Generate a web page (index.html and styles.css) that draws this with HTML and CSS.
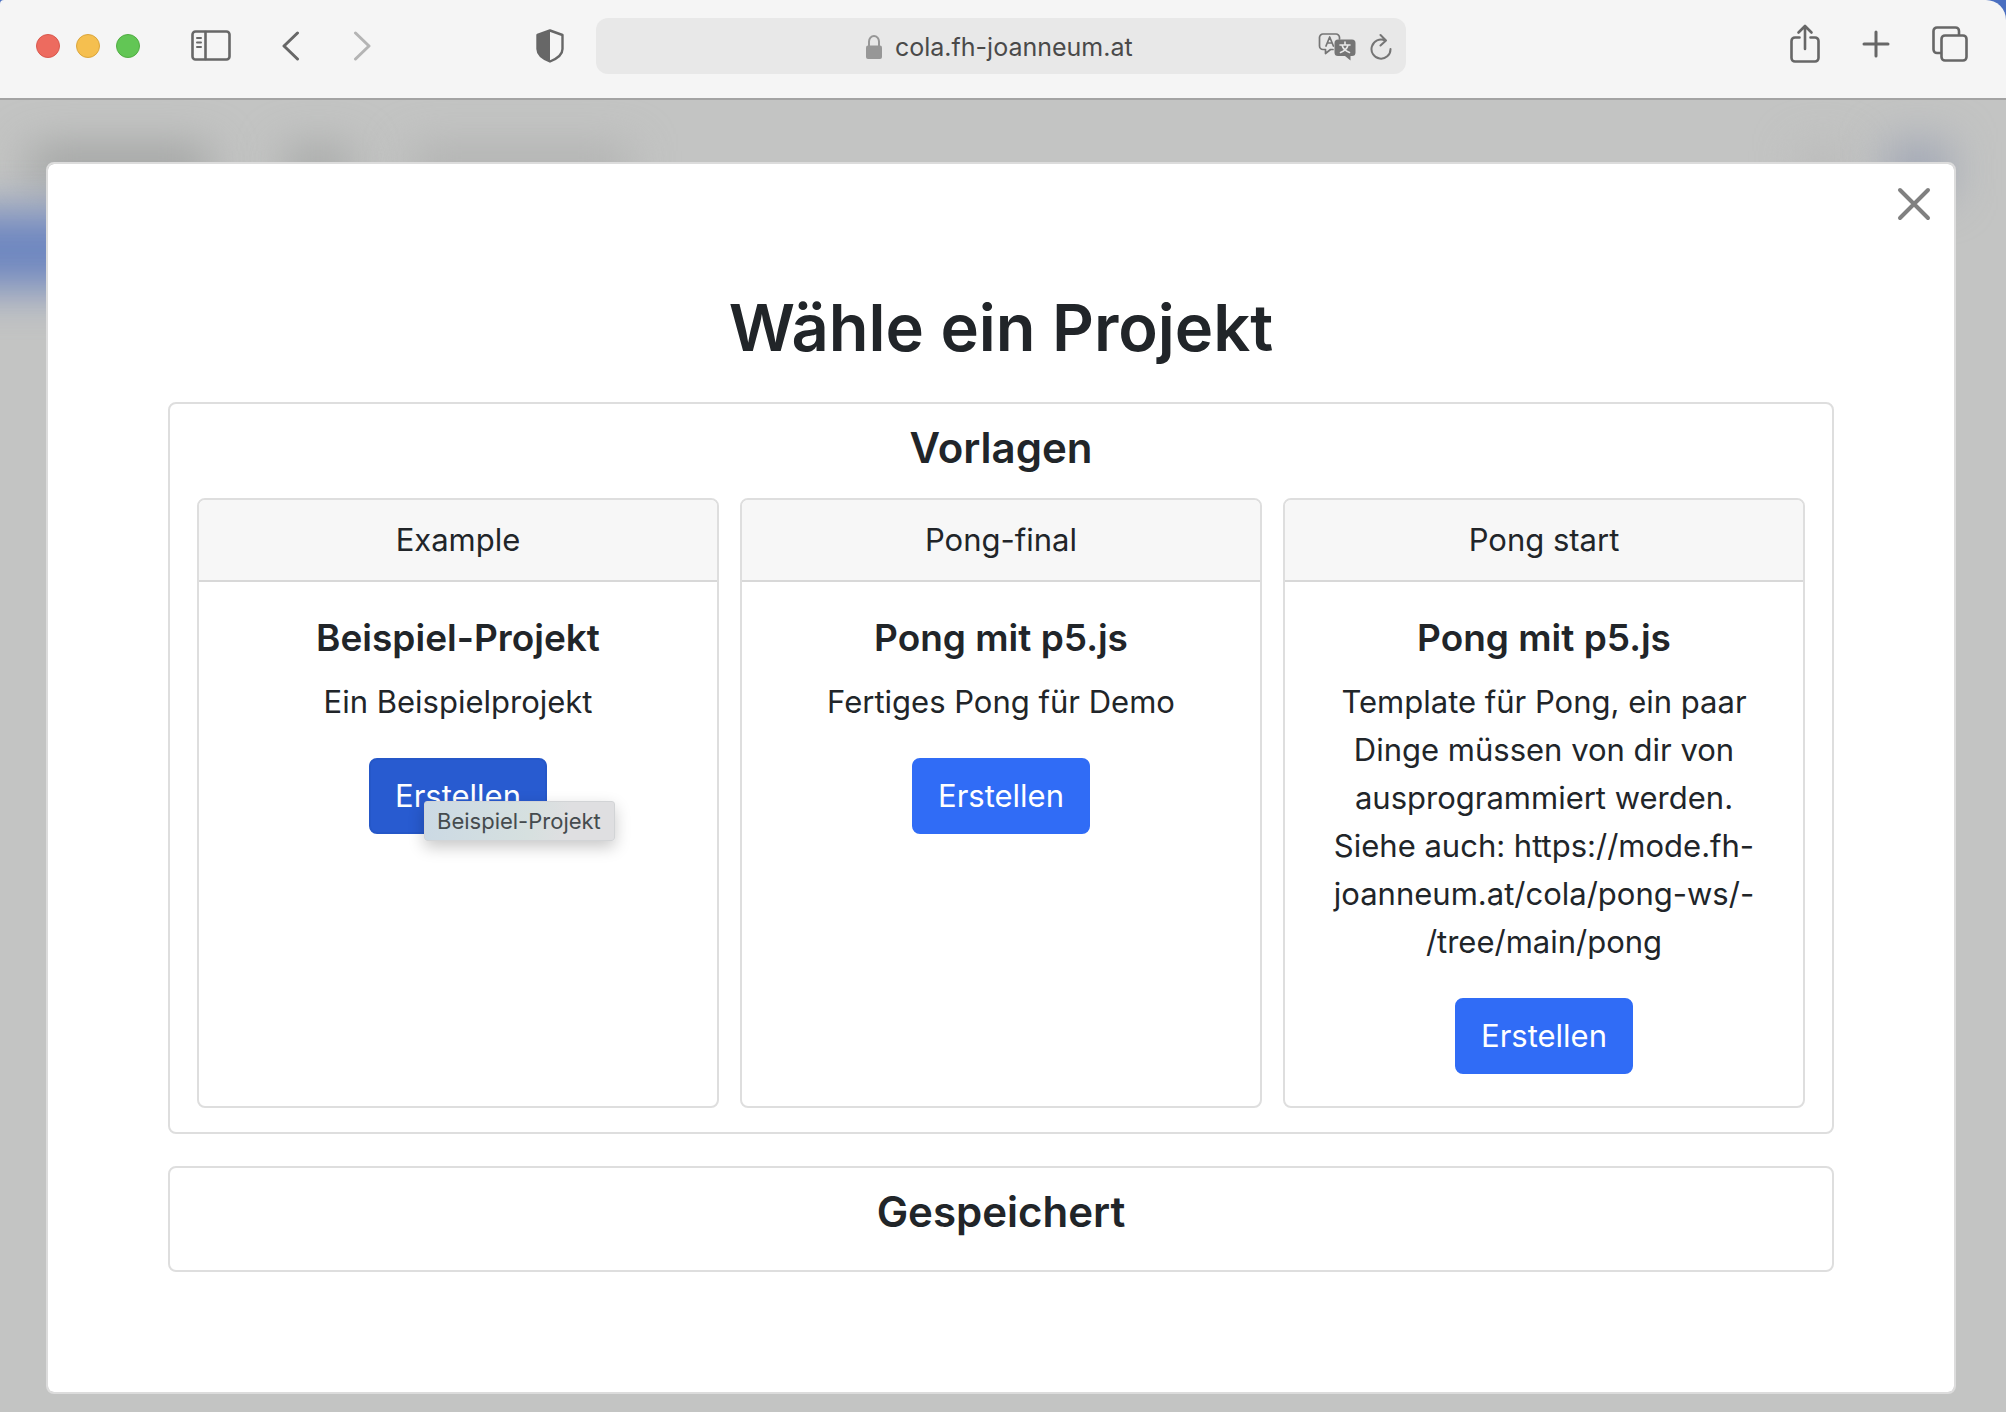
FILE: index.html
```html
<!DOCTYPE html>
<html lang="de">
<head>
<meta charset="utf-8">
<title>cola.fh-joanneum.at</title>
<link rel="stylesheet" href="styles.css">
</head>
<body>
<header class="toolbar">
  <div class="toolbar-side">
    <div class="lights">
      <span class="light light-close"></span>
      <span class="light light-min"></span>
      <span class="light light-max"></span>
    </div>
    <button class="tool tool-sidebar" aria-label="Seitenleiste">
      <svg width="40" height="32" viewBox="0 0 40 32" fill="none" stroke="#676767" stroke-width="2.6" stroke-linecap="round">
        <rect x="1.5" y="1.5" width="37" height="28" rx="3"/>
        <path d="M14.5 2v27"/>
        <path d="M6 8h4M6 12.500h4M6 17h4" stroke-width="2"/>
      </svg>
    </button>
    <button class="tool tool-back" aria-label="Zurück">
      <svg width="18" height="30" viewBox="0 0 18 30" fill="none" stroke="#676767" stroke-width="3" stroke-linecap="round" stroke-linejoin="round"><path d="M15.500 2 2 15l13.500 13"/></svg>
    </button>
    <button class="tool tool-forward" aria-label="Vorwärts" disabled>
      <svg width="18" height="30" viewBox="0 0 18 30" fill="none" stroke="#b4b4b4" stroke-width="3" stroke-linecap="round" stroke-linejoin="round"><path d="M2.500 2 16 15 2.500 28"/></svg>
    </button>
    <button class="tool tool-shield" aria-label="Datenschutzbericht">
      <svg width="28" height="34" viewBox="0 0 28 34">
        <path d="M14 1.500 26.500 6v14c0 5-5 9.500-12.500 12.500C6.500 29.500 1.500 25 1.500 20V6z" fill="none" stroke="#676767" stroke-width="2.400" stroke-linejoin="round"/>
        <path d="M14 1.500v31C6.500 29.500 1.500 25 1.500 20V6z" fill="#676767"/>
      </svg>
    </button>
  </div>
  <div class="address">
    <label class="address-field">
      <svg width="18" height="26" viewBox="0 0 18 26"><path d="M4 12V7.500a5 5.500 0 0 1 10 0V12" fill="none" stroke="#979797" stroke-width="2"/><rect x="1" y="11.500" width="16" height="13.500" rx="2" fill="#979797"/></svg>
      <input class="address-input" type="text" value="cola.fh-joanneum.at" aria-label="Adresse">
    </label>
    <div class="address-tools">
      <button class="tool" aria-label="Übersetzen">
        <svg width="38" height="28" viewBox="0 0 38 28" fill="none" stroke-linecap="round" stroke-linejoin="round">
          <g stroke="#757575" stroke-width="1.700">
            <path d="M15 16.500h-2.500L7.500 20.500v-4H5a3.500 3.500 0 0 1-3.500-3.500V4.500A3.500 3.500 0 0 1 5 1h13a3.500 3.500 0 0 1 3.500 3.500V6"/>
            <path d="M8 13 11.700 4l3.700 9M9.300 10h4.800"/>
          </g>
          <path d="M20 6.500h14a3.500 3.500 0 0 1 3.500 3.500v9.500a3.500 3.500 0 0 1-3.500 3.500h-1.500v4.500L27 23h-7a3.500 3.500 0 0 1-3.500-3.500V10A3.500 3.500 0 0 1 20 6.500z" fill="#757575"/>
          <path d="M27 9v2.500M22 12h10M24 12c.7 3 3.500 6 7.500 7.500M30 12c-.7 3-3.500 6-7.500 7.500" stroke="#e8e8e8" stroke-width="1.600"/>
        </svg>
      </button>
      <button class="tool" aria-label="Neu laden">
        <svg width="22" height="28" viewBox="0 0 22 28" fill="none" stroke="#757575" stroke-width="2" stroke-linecap="round" stroke-linejoin="round"><path d="M20.500 16A9.500 9.500 0 1 1 15 7.500M10.500 2l5.500 5.500-5.500 5"/></svg>
      </button>
    </div>
  </div>
  <div class="toolbar-side toolbar-right">
    <button class="tool" aria-label="Teilen">
      <svg width="30" height="40" viewBox="0 0 30 40" fill="none" stroke="#676767" stroke-width="2.600" stroke-linecap="round" stroke-linejoin="round"><path d="M9.500 13.500H5a3.500 3.500 0 0 0-3.500 3.500v17A3.500 3.500 0 0 0 5 37.500h20a3.500 3.500 0 0 0 3.500-3.500V17a3.500 3.500 0 0 0-3.500-3.500h-4.500M15 25V2.500M8.500 8.500 15 2l6.500 6.500"/></svg>
    </button>
    <button class="tool" aria-label="Neuer Tab">
      <svg width="28" height="28" viewBox="0 0 28 28" fill="none" stroke="#676767" stroke-width="3" stroke-linecap="round"><path d="M14 2v24M2 14h24"/></svg>
    </button>
    <button class="tool" aria-label="Tabübersicht">
      <svg width="36" height="36" viewBox="0 0 36 36" fill="none" stroke="#676767" stroke-width="2.600" stroke-linejoin="round"><rect x="9.500" y="9.500" width="25" height="25" rx="3.500"/><path d="M9 27H5a3.500 3.500 0 0 1-3.500-3.500V5A3.500 3.500 0 0 1 5 1.500h18.500A3.500 3.500 0 0 1 27 5v4"/></svg>
    </button>
  </div>
</header>

<main class="stage">
  <div class="haze" aria-hidden="true">
    <span class="blot blot-brand"></span>
    <span class="blot blot-nav"></span>
    <span class="blot blot-links"></span>
    <span class="blot blot-grey"></span>
    <span class="blot blot-button"></span>
    <span class="blot blot-band"></span>
  </div>

  <section class="modal" role="dialog" aria-labelledby="modal-title">
    <button class="modal-close" aria-label="Schließen">
      <svg width="34" height="34" viewBox="0 0 34 34" fill="none" stroke="#808080" stroke-width="4" stroke-linecap="round"><path d="M3 3l28 28M31 3 3 31"/></svg>
    </button>
    <h1 class="modal-title" id="modal-title">Wähle ein Projekt</h1>

    <section class="panel">
      <h4 class="panel-title">Vorlagen</h4>
      <div class="cards">
        <article class="card">
          <div class="card-header">Example</div>
          <div class="card-body">
            <h5 class="card-title">Beispiel-Projekt</h5>
            <p class="card-text">Ein Beispielprojekt</p>
            <div class="action">
              <button class="btn btn-hover" aria-describedby="tip">Erstellen</button>
              <span class="tooltip" role="tooltip" id="tip">Beispiel-Projekt</span>
            </div>
          </div>
        </article>
        <article class="card">
          <div class="card-header">Pong-final</div>
          <div class="card-body">
            <h5 class="card-title">Pong mit p5.js</h5>
            <p class="card-text">Fertiges Pong für Demo</p>
            <div class="action"><button class="btn">Erstellen</button></div>
          </div>
        </article>
        <article class="card">
          <div class="card-header">Pong start</div>
          <div class="card-body">
            <h5 class="card-title">Pong mit p5.js</h5>
            <p class="card-text">Template für Pong, ein paar Dinge müssen von dir von ausprogrammiert werden. Siehe auch: https://mode.fh-<wbr>joanneum.at/cola/pong-ws/-<wbr>/tree/main/pong</p>
            <div class="action"><button class="btn">Erstellen</button></div>
          </div>
        </article>
      </div>
    </section>

    <section class="panel">
      <h4 class="panel-title">Gespeichert</h4>
    </section>
  </section>
</main>
</body>
</html>
```
FILE: styles.css
```css
* {
  box-sizing: border-box;
}

html {
  background: #4a6fc0;
}

body {
  margin: 0;
  min-height: 100vh;
  display: flex;
  flex-direction: column;
  font-family: Inter, "Liberation Sans", sans-serif;
  font-size: 31px;
  line-height: 48px;
  color: #212529;
  background: #4a6fc0;
}

h1, h4, h5, p {
  margin: 0;
}

button {
  font: inherit;
}

svg {
  display: block;
}

/* Browser toolbar */
.toolbar {
  display: grid;
  grid-template-columns: 1fr minmax(0, 810px) 1fr;
  align-items: start;
  padding: 18px 38px 24px 34px;
  background: #f5f5f5;
  border-bottom: 2px solid #a3a3a3;
  border-radius: 4px 20px 0 0;
}

.toolbar-side {
  display: flex;
  align-items: center;
  height: 56px;
}

.toolbar-right {
  justify-content: flex-end;
  gap: 42px;
  height: 52px;
}

.tool {
  padding: 0;
  border: 0;
  background: none;
}

.lights {
  display: flex;
  gap: 16px;
  padding-left: 2px;
}

.light {
  width: 24px;
  height: 24px;
  border: 1px solid;
  border-radius: 50%;
}

.light-close {
  background: #ed6b5f;
  border-color: #d9594e;
}

.light-min {
  background: #f5bf4f;
  border-color: #dba63c;
}

.light-max {
  background: #62c655;
  border-color: #51ad43;
}

.tool-sidebar {
  margin-left: 51px;
}

.tool-back {
  margin-left: 51px;
}

.tool-forward {
  margin-left: 53px;
}

.tool-shield {
  margin-left: auto;
  margin-right: 32px;
}

.address {
  display: grid;
  grid-template-columns: 1fr auto 1fr;
  align-items: center;
  height: 56px;
  padding: 2px 14px 0;
  background: #e8e8e8;
  border-radius: 12px;
}

.address-field {
  grid-column: 2;
  display: flex;
  align-items: center;
  gap: 12px;
}

.address-input {
  width: 242px;
  padding: 0;
  border: 0;
  outline: 0;
  background: none;
  font: 25px/32px Inter, "Liberation Sans", sans-serif;
  color: #4a4a4a;
}

.address-tools {
  display: flex;
  justify-content: flex-end;
  gap: 14px;
}

/* Dimmed page behind the dialog */
.stage {
  flex: 1;
  position: relative;
  padding: 62px 50px 18px 46px;
  overflow: hidden;
  background: #c3c4c3;
}

.haze {
  position: absolute;
  inset: 0;
}

.blot {
  position: absolute;
  filter: blur(22px);
}

.blot-brand {
  left: 30px;
  top: 48px;
  width: 180px;
  height: 36px;
  background: #9c9e9d;
}

.blot-nav {
  left: 284px;
  top: 48px;
  width: 68px;
  height: 36px;
  background: #a2a4a3;
}

.blot-links {
  left: 410px;
  top: 48px;
  width: 220px;
  height: 36px;
  background: #afb0af;
}

.blot-grey {
  right: 160px;
  top: 48px;
  width: 46px;
  height: 36px;
  background: #b8b8b8;
}

.blot-button {
  right: 56px;
  top: 42px;
  width: 64px;
  height: 54px;
  background: #9fa5b4;
}

.blot-band {
  left: -80px;
  top: 112px;
  width: 200px;
  height: 76px;
  background: #6c85c0;
}

/* Dialog */
.modal {
  position: relative;
  padding: 120px;
  text-align: center;
  background: #fff;
  background-clip: padding-box;
  border: 2px solid #dcdcdc;
  border-radius: 8px;
}

.modal-close {
  position: absolute;
  top: 23px;
  right: 23px;
  padding: 0;
  border: 0;
  background: none;
}

.modal-title {
  margin-bottom: 30px;
  font-size: 65px;
  font-weight: 600;
  line-height: 88px;
}

.panel {
  padding: 16px 27px 24px;
  border: 2px solid #dedede;
  border-radius: 8px;
}

.panel + .panel {
  margin-top: 32px;
  padding-bottom: 30px;
}

.panel-title {
  font-size: 42px;
  font-weight: 600;
  line-height: 56px;
}

.cards {
  display: grid;
  grid-template-columns: repeat(3, 1fr);
  gap: 21px;
  margin-top: 22px;
}

.card {
  border: 2px solid #dedede;
  border-radius: 8px;
}

.card-header {
  padding: 16px 32px;
  background: #f7f7f7;
  border-bottom: 2px solid #d8d8d8;
  border-radius: 6px 6px 0 0;
}

.card-body {
  padding: 32px;
}

.card-title {
  margin-bottom: 16px;
  font-size: 37px;
  font-weight: 600;
  line-height: 48px;
}

.card-text {
  margin-bottom: 32px;
}

.action {
  position: relative;
  width: max-content;
  margin: 0 auto;
}

.btn {
  display: block;
  padding: 12px 24px;
  border: 2px solid #306cf6;
  border-radius: 8px;
  background: #306cf6;
  color: #fff;
}

.btn-hover {
  background: #285bd0;
  border-color: #2557c8;
}

.tooltip {
  position: absolute;
  top: 43px;
  left: 55px;
  padding: 4px 13px 4px 12px;
  border: 1px solid #d2d4d6;
  border-radius: 3px;
  background: linear-gradient(100deg, #cbd9e4, #d6e0df 55%, #dfdfe1 75%);
  box-shadow: 0 6px 16px rgba(0, 0, 0, 0.22);
  font-size: 22px;
  line-height: 30px;
  color: #454b4e;
  white-space: nowrap;
}
```
